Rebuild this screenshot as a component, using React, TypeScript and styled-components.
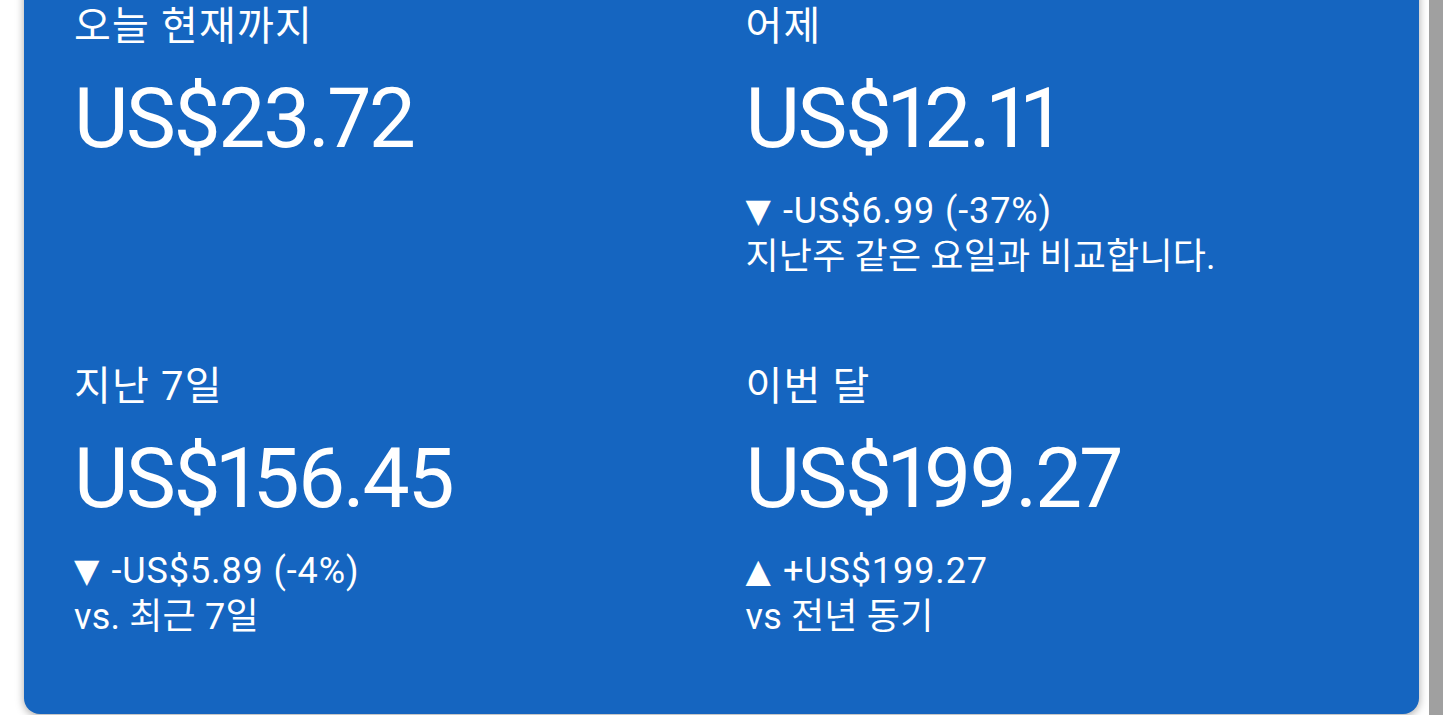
import React from "react";
import styled, { createGlobalStyle } from "styled-components";

const GlobalStyle = createGlobalStyle`
  html, body {
    margin: 0;
    padding: 0;
    background: #ffffff;
    overflow: hidden;
  }
  body {
    font-family: Roboto, "Noto Sans CJK KR", sans-serif;
  }
`;

type Stat = {
  label: string;
  value: string;
  change?: { dir: "up" | "down"; text: string };
  note?: string;
};

const stats: Stat[] = [
  { label: "오늘 현재까지", value: "US$23.72" },
  {
    label: "어제",
    value: "US$12.11",
    change: { dir: "down", text: "-US$6.99 (-37%)" },
    note: "지난주 같은 요일과 비교합니다.",
  },
  {
    label: "지난 7일",
    value: "US$156.45",
    change: { dir: "down", text: "-US$5.89 (-4%)" },
    note: "vs. 최근 7일",
  },
  {
    label: "이번 달",
    value: "US$199.27",
    change: { dir: "up", text: "+US$199.27" },
    note: "vs 전년 동기",
  },
];

const S = {
  Page: styled.div`
    display: flex;
    width: 1443px;
    height: 715px;
    overflow: hidden;
  `,
  Main: styled.div`
    flex: 1;
    padding: 0 10px 0 24px;
  `,
  // the card is scrolled, its top sits above the viewport
  Card: styled.div`
    margin-top: -40px;
    background: #1565c0;
    border-radius: 16px;
    box-shadow: 0 2px 8px rgba(0, 0, 0, 0.35);
    padding: 42px 50px 74px 50px;
    display: grid;
    grid-template-columns: 1fr 1fr;
    column-gap: 48px;
    row-gap: 82px;
    color: #ffffff;
  `,
  Cell: styled.div`
    display: flex;
    flex-direction: column;
    min-height: 278px;
  `,
  Label: styled.div`
    font-size: 40px;
    line-height: 50px;
    letter-spacing: 1.2px;
  `,
  Value: styled.div`
    font-size: 84px;
    line-height: 100px;
    margin-top: 17px;
    letter-spacing: -2.4px;
    font-feature-settings: "pnum" 1, "tnum" 0;
    font-variant-numeric: proportional-nums;
  `,
  Change: styled.div`
    margin-top: 19px;
    font-size: 36px;
    line-height: 46px;
    letter-spacing: 0.9px;
  `,
  Note: styled.div`
    font-size: 36px;
    line-height: 46px;
    letter-spacing: 0.2px;
  `,
  Arrow: styled.span`
    display: inline-block;
    font-family: "DejaVu Sans", sans-serif;
    font-size: 33px;
    margin-right: 12px;
    vertical-align: 1px;
    letter-spacing: 0;
  `,
  Scrollbar: styled.div`
    width: 14px;
    background: #a0a0a0;
  `,
};

const App = () => {
  return (
    <S.Page>
      <GlobalStyle />
      <S.Main>
        <S.Card>
          {stats.map((s) => (
            <S.Cell key={s.label}>
              <S.Label>{s.label}</S.Label>
              <S.Value>{s.value}</S.Value>
              {s.change && (
                <S.Change>
                  <S.Arrow>{s.change.dir === "up" ? "▲" : "▼"}</S.Arrow>
                  {s.change.text}
                </S.Change>
              )}
              {s.note && <S.Note>{s.note}</S.Note>}
            </S.Cell>
          ))}
        </S.Card>
      </S.Main>
      <S.Scrollbar />
    </S.Page>
  );
};

export default App;
